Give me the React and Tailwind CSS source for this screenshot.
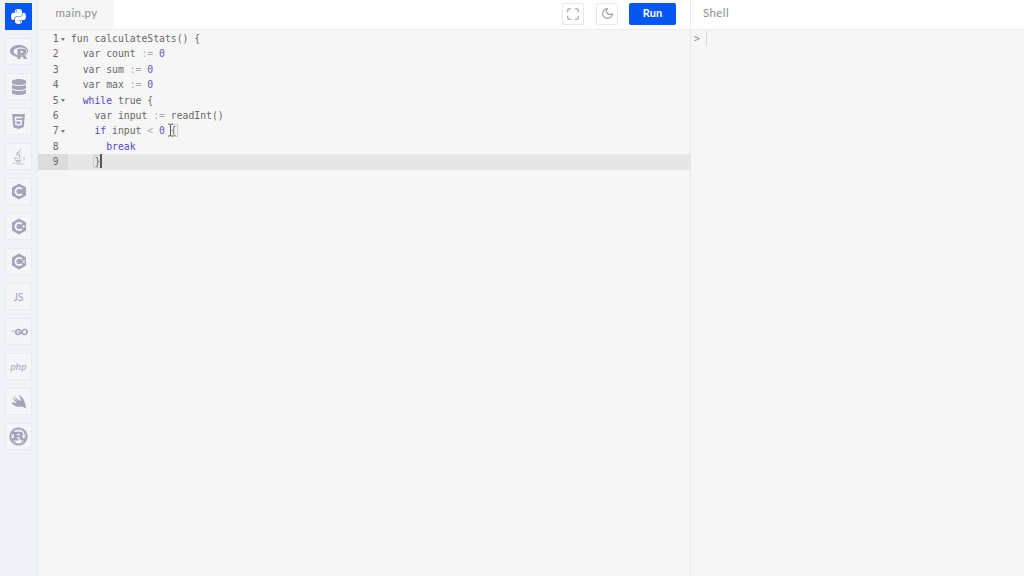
import { LuMaximize, LuMoon } from 'react-icons/lu';
import { FaPython, FaRProject, FaDatabase, FaHtml5, FaJava, FaRust } from 'react-icons/fa';
import { SiGo } from 'react-icons/si';

function HexC({ extra }) {
  return (
    <svg width="16" height="17" viewBox="0 0 16 17">
      <path d="M8 .5l7 4v8l-7 4-7-4v-8z" fill="currentColor" />
      <path d="M10.8 6.2a3.6 3.6 0 1 0 0 4.6" fill="none" stroke="#f3f5f9" strokeWidth="1.9" />
      {extra === 'plus' && <path d="M11.2 8.5h3M12.7 7v3" stroke="#f3f5f9" strokeWidth=".9" />}
      {extra === 'sharp' && <path d="M11.4 7.6h2.6M11.4 9.4h2.6" stroke="#f3f5f9" strokeWidth="1" />}
    </svg>
  );
}

function SwiftBird() {
  return (
    <svg width="18" height="17" viewBox="0 0 24 24" fill="currentColor">
      <path d="M2 15c4 3.500 9 5.500 13.500 4 2 .2 4.500 1.500 6 3 .5-3 .2-6-1.500-8.500C19.500 8.500 15.500 4 11 2.500c2.500 3 4 6 3.500 9C11 9.500 7 6.500 4 3.500c2 3 4.500 6 7 8.500-3-1.500-6-3.500-8.500-5.500 1.500 3 4 5.500 6.500 7.500-2.500 0-5-.200-7-1z" />
    </svg>
  );
}

const languages = [
  { icon: <FaPython size={17} />, active: true },
  { icon: <FaRProject size={18} /> },
  { icon: <FaDatabase size={16} /> },
  { icon: <FaHtml5 size={17} /> },
  { icon: <FaJava size={17} /> },
  { icon: <HexC /> },
  { icon: <HexC extra="plus" /> },
  { icon: <HexC extra="sharp" /> },
  { text: 'JS', className: 'pt-[3px] text-[10.5px]' },
  { icon: <SiGo size={18} /> },
  { text: 'php', className: 'pb-[1px] text-[10px] italic' },
  { icon: <SwiftBird /> },
  { icon: <FaRust size={19} /> },
];

const kw = 'text-[#4f46c8]';
const num = 'text-[#5d58b8]';
const op = 'text-[#a9a9b0]';

const lines = [
  { fold: true, code: <>fun calculateStats() {'{'}</> },
  { code: <>{'  '}var count <span className={op}>:=</span> <span className={num}>0</span></> },
  { code: <>{'  '}var sum <span className={op}>:=</span> <span className={num}>0</span></> },
  { code: <>{'  '}var max <span className={op}>:=</span> <span className={num}>0</span></> },
  { fold: true, code: <>{'  '}<span className={kw}>while</span> true {'{'}</> },
  { code: <>{'    '}var input <span className={op}>:=</span> readInt()</> },
  {
    fold: true,
    code: (
      <>
        {'    '}<span className={kw}>if</span> input <span className={op}>&lt;</span> <span className={num}>0</span>{' '}
        <span className="outline outline-1 outline-[#cfcfcf]">{'{'}</span>
      </>
    ),
  },
  { code: <>{'      '}<span className={kw}>break</span></> },
  {
    active: true,
    code: (
      <>
        {'    '}<span className="outline outline-1 outline-[#cfcfcf]">{'}'}</span>
        <span className="relative">
          <span className="absolute left-0 top-[-2px] h-[14px] w-[1.5px] bg-[#555]" />
        </span>
      </>
    ),
  },
];

function App() {
  return (
    <div className="relative flex h-[576px] w-[1024px] overflow-hidden bg-white font-['Lato',sans-serif] antialiased">
      <aside className="flex w-[38px] shrink-0 flex-col items-center gap-[8px] border-r border-[#e8ebf0] bg-[#eff3f8] pt-[3px]">
        {languages.map((lang, i) => (
          <div
            key={i}
            className={`flex h-[27px] w-[27px] items-center justify-center ${
              lang.active
                ? 'bg-[#0556f3] text-white'
                : 'border border-[#e8ebf1] bg-[#f3f5f9] text-[#a2a5b8]'
            } ${lang.className || ''}`}
          >
            {lang.icon || lang.text}
          </div>
        ))}
      </aside>

      <main className="flex min-w-0 flex-1 flex-col">
        <header className="flex h-[30px] shrink-0 border-b border-[#ececec]">
          <div className="flex w-[653px] items-center justify-between border-r border-[#ececec]">
            <div className="flex h-full w-[76px] items-center justify-center bg-[#f6f6f6] pb-[3px] pl-[1px] text-[11.5px] tracking-[0.4px] text-[#8d8d8d]">
              main.py
            </div>
            <div className="flex items-center pb-[2px] pr-[14px]">
              <button className="flex h-[22px] w-[22px] items-center justify-center rounded-[2px] border border-[#e8e8e8] text-[#9b9b9b]">
                <LuMaximize size={14} />
              </button>
              <button className="ml-[12px] flex h-[22px] w-[22px] items-center justify-center rounded-[2px] border border-[#e8e8e8] text-[#9b9b9b]">
                <LuMoon size={13} />
              </button>
              <button className="ml-[11px] flex h-[22px] w-[47px] items-center justify-center rounded-[2px] bg-[#0556f3] text-[11px] font-bold text-white">
                Run
              </button>
            </div>
          </div>
          <div className="flex flex-1 items-center pb-[3px] pl-[12px] text-[11.5px] tracking-[0.4px] text-[#8d8d8d]">Shell</div>
        </header>

        <div className="flex min-h-0 flex-1">
          <section className="w-[653px] border-r border-[#e6e6e6] bg-[#f6f6f6] pt-px font-['DejaVu_Sans_Mono',monospace] text-[9.75px] leading-[15.4px] text-[#666666] opacity-[.99]">
            {lines.map((line, i) => (
              <div key={i} className={`relative flex h-[15.4px] ${line.active ? 'bg-[#e6e6e6]' : ''}`}>
                <div
                  className={`relative w-[30px] shrink-0 pr-[9.5px] text-right text-[#666666] ${
                    line.active ? 'bg-[#dcdcdc]' : ''
                  }`}
                >
                  {i + 1}
                  {line.fold && (
                    <span className="absolute right-[3px] top-[6.5px] h-0 w-0 border-x-[2px] border-t-[3px] border-x-transparent border-t-[#777]" />
                  )}
                </div>
                <div className="whitespace-pre pl-[3px]">{line.code}</div>
              </div>
            ))}
          </section>

          <section className="flex flex-1 bg-[#f6f6f6] pl-[3px] pt-px font-['DejaVu_Sans_Mono',monospace] text-[9.75px] leading-[15.4px] text-[#8a8a8a]">
            <span>&gt;</span>
            <span className="ml-[6px] h-[15px] w-px bg-[#d8d8d8]" />
          </section>
        </div>
      </main>

      {/* mouse pointer sitting over the editor */}
      <svg className="absolute left-[167px] top-[123px]" width="7" height="14" viewBox="0 0 7 14" fill="none" stroke="#555" strokeWidth="1">
        <path d="M1 1h1.500L3.500 2l1-1H6M3.500 2v10M1 13h1.500l1-1 1 1H6" />
      </svg>
    </div>
  );
}

export default App;
